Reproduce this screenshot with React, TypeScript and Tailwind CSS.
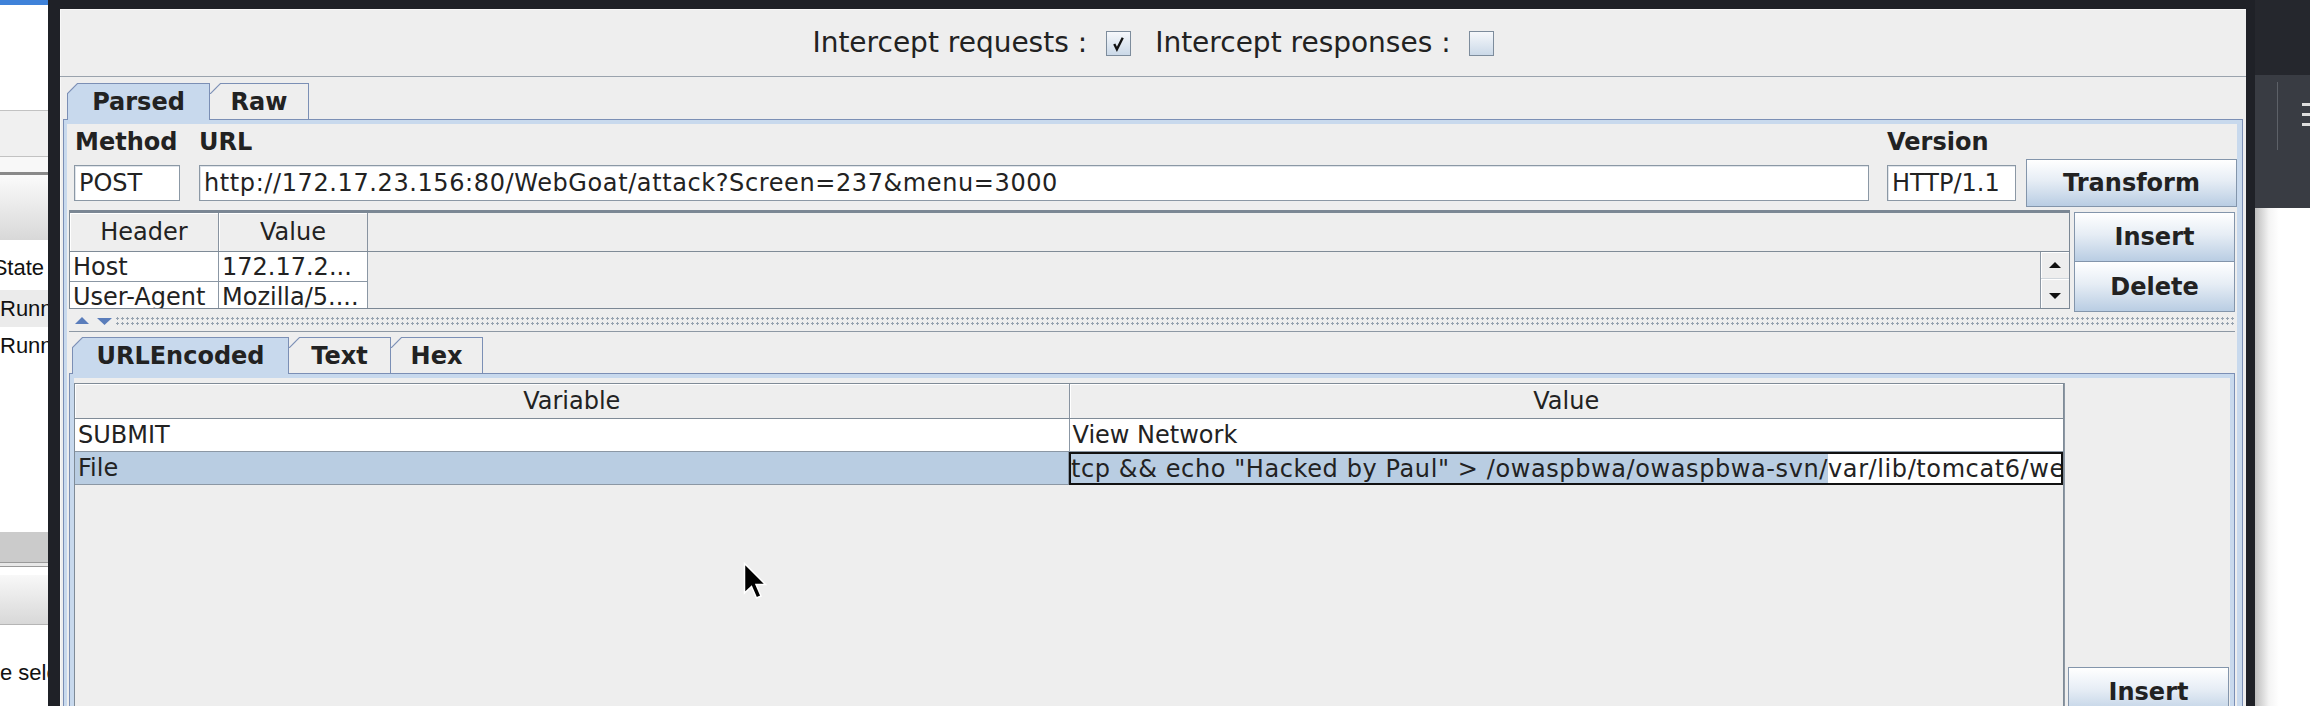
import React from "react";

// Metal look-and-feel tab with the chamfered top-left corner
function Tab({ label, selected, first, className }: { label: string; selected?: boolean; first?: boolean; className: string }) {
  return (
    <div
      className={`relative flex shrink-0 items-center justify-center border border-b-0 border-[#7b8fb5] text-[24px] font-bold text-[#222222] ${
        selected ? "z-10 h-[37px] bg-[#c8d9ed] pb-px" : "h-[36px] bg-[#eeeeee]"
      } ${className}`}
    >
      <svg
        className={`pointer-events-none absolute -top-px ${first ? "-left-px" : "left-0"}`}
        width="11"
        height="11"
        viewBox="0 0 11 11"
      >
        <polygon points="0,0 11,0 0,11" fill="#eeeeee" />
        <line x1="0" y1="11" x2="11" y2="0" stroke="#7b8fb5" strokeWidth="1.2" />
      </svg>
      {label}
    </div>
  );
}

function CheckBox({ checked, className }: { checked?: boolean; className: string }) {
  return (
    <div
      className={`flex h-[25px] w-[25px] shrink-0 items-center justify-center border border-[#7d8c9c] bg-[linear-gradient(to_bottom,#f6f8fb,#cbd9e8)] ${className}`}
    >
      {checked && (
        <svg width="17" height="17" viewBox="0 0 16 16">
          <path d="M4 8.5 L6.5 13.5 L12 2.5" fill="none" stroke="#111111" strokeWidth="2.2" />
        </svg>
      )}
    </div>
  );
}

function Field({ value, className }: { value: string; className: string }) {
  return (
    <div
      className={`flex h-[36px] items-center overflow-hidden whitespace-nowrap border border-[#8b98a5] bg-white pl-[4px] text-[24px] text-[#222222] shadow-[inset_1px_1px_0_#dfe4ea] ${className}`}
    >
      {value}
    </div>
  );
}

function Btn({ label, className }: { label: string; className: string }) {
  return (
    <div
      className={`flex shrink-0 items-center justify-center border border-[#8395ab] bg-[linear-gradient(to_bottom,#ffffff,#e6edf5_45%,#b9cde3)] text-[24px] font-bold text-[#222222] ${className}`}
    >
      {label}
    </div>
  );
}

function HeadCell({ label, className }: { label: string; className: string }) {
  return (
    <div
      className={`flex items-center justify-center border-r border-[#8893a0] text-[24px] shadow-[inset_1px_1px_0_#ffffff] ${className}`}
    >
      {label}
    </div>
  );
}

function BodyCell({ label, className }: { label: string; className: string }) {
  return (
    <div
      className={`flex items-center overflow-hidden whitespace-nowrap border-r border-b border-[#8b97a4] pl-[3px] text-[24px] ${className}`}
    >
      {label}
    </div>
  );
}

function LeftSliver() {
  return (
    <div className="flex w-[48px] shrink-0 flex-col overflow-hidden bg-white font-['Liberation_Sans',Arial,sans-serif] text-[22px] text-[#111111]">
      <div className="h-[5px] shrink-0 bg-[#3f82d9]" />
      <div className="h-[105px] shrink-0" />
      <div className="h-[47px] shrink-0 border-y border-[#c2c2c2] bg-[#f0f0f0]" />
      <div className="h-[15px] shrink-0 bg-[#f8f8f8]" />
      <div className="h-[68px] shrink-0 border-t-[3px] border-[#8a8a8a] bg-[linear-gradient(to_bottom,#fbfbfb,#d8d8d8)]" />
      <div className="h-[12px] shrink-0" />
      <div className="flex h-[30px] shrink-0 items-center justify-end whitespace-nowrap pr-[4px]">State</div>
      <div className="h-[8px] shrink-0" />
      <div className="flex h-[37px] shrink-0 items-center whitespace-nowrap bg-[#ebebeb]">Running</div>
      <div className="flex h-[37px] shrink-0 items-center whitespace-nowrap">Running</div>
      <div className="h-[168px] shrink-0" />
      <div className="h-[30px] shrink-0 bg-[#cbcbcb]" />
      <div className="h-[5px] shrink-0 border-y border-[#9a9a9a] bg-[#e8e8e8]" />
      <div className="h-[8px] shrink-0" />
      <div className="h-[50px] shrink-0 border-b border-[#b5b5b5] bg-[linear-gradient(to_bottom,#f8f8f8,#d8d8d8)]" />
      <div className="h-[30px] shrink-0" />
      <div className="flex h-[34px] shrink-0 items-center whitespace-nowrap">e selected</div>
    </div>
  );
}

function RightSliver() {
  return (
    <div className="flex w-[55px] shrink-0 flex-col">
      <div className="h-[75px] shrink-0 bg-[#25272d]" />
      <div className="flex h-[133px] shrink-0 items-start bg-[#393c43] pl-[22px] pt-[7px]">
        <div className="h-[68px] w-[2px] bg-[#5d6168]" />
        <div className="ml-[24px] mt-[21px] flex w-[14px] flex-col gap-[7px]">
          <div className="h-[3px] bg-[#dddddd]" />
          <div className="h-[3px] bg-[#dddddd]" />
          <div className="h-[3px] bg-[#dddddd]" />
        </div>
      </div>
      <div className="flex-1 bg-[linear-gradient(to_right,#bdbdbd,#f4f4f4_14px,#ffffff_24px)]" />
    </div>
  );
}

function HeaderTable() {
  return (
    <div className="flex h-[99px] flex-1 flex-col overflow-hidden border border-t-[3px] border-[#7b8794] bg-[#eeeeee]">
      <div className="flex h-[39px] shrink-0 border-b border-[#7f8b97]">
        <HeadCell label="Header" className="w-[149px]" />
        <HeadCell label="Value" className="w-[149px]" />
      </div>
      <div className="flex flex-1">
        <div className="flex-1">
          <div className="flex h-[30px]">
            <BodyCell label="Host" className="w-[149px] bg-white" />
            <BodyCell label="172.17.2..." className="w-[149px] bg-white" />
          </div>
          <div className="flex h-[30px]">
            <BodyCell label="User-Agent" className="w-[149px] bg-white" />
            <BodyCell label="Mozilla/5...." className="w-[149px] bg-white" />
          </div>
        </div>
        <div className="flex w-[29px] flex-col border-l border-[#8d98a4]">
          <div className="flex h-[27px] items-center justify-center border-b border-[#d0d6dc] shadow-[inset_1px_1px_0_#ffffff]">
            <svg width="12" height="6" viewBox="0 0 12 6">
              <polygon points="6,0 12,6 0,6" fill="#111111" />
            </svg>
          </div>
          <div className="flex flex-1 items-center justify-center shadow-[inset_1px_1px_0_#ffffff]">
            <svg width="12" height="6" viewBox="0 0 12 6">
              <polygon points="0,0 12,0 6,6" fill="#111111" />
            </svg>
          </div>
        </div>
      </div>
    </div>
  );
}

function Divider() {
  return (
    <div className="flex h-[20px] shrink-0 items-center border-b border-[#8d98a4] pl-[6px]">
      <svg width="40" height="9" viewBox="0 0 40 9" className="shrink-0">
        <polygon points="7,0 14,7 0,7" fill="#5a7dbb" />
        <polygon points="22,1 37,1 29.5,8" fill="#5a7dbb" />
      </svg>
      <div className="h-[11px] flex-1 bg-[radial-gradient(circle,#97a3b0_1px,transparent_1.4px)] bg-[length:5px_5px]" />
    </div>
  );
}

function ParamTable() {
  return (
    <div className="flex flex-1 flex-col overflow-hidden border-x border-t border-[#7f8b97] bg-[#eeeeee]">
      <div className="flex h-[35px] shrink-0 border-b border-[#7f8b97]">
        <HeadCell label="Variable" className="flex-1" />
        <HeadCell label="Value" className="flex-1 border-r-0" />
      </div>
      <div className="flex h-[33px] shrink-0">
        <BodyCell label="SUBMIT" className="flex-1 bg-white" />
        <BodyCell label="View Network" className="flex-1 border-r-0 bg-white" />
      </div>
      <div className="flex h-[33px] shrink-0">
        <BodyCell label="File" className="flex-1 bg-[#b9cde2]" />
        <div className="flex flex-1 overflow-hidden whitespace-nowrap border-2 border-[#111111] bg-white text-[24px] tracking-[0.6px]">
          <span className="flex items-center bg-[#b9cde2]">tcp &amp;&amp; echo "Hacked by Paul" &gt; /owaspbwa/owaspbwa-svn/</span>
          <span className="flex items-center">var/lib/tomcat6/webapps/WebGoat/</span>
        </div>
      </div>
    </div>
  );
}

function MainWindow() {
  return (
    <div className="flex w-[2186px] shrink-0 flex-col bg-[#eeeeee] text-[#222222] shadow-[inset_1px_0_0_#f8f8f8]">
      <div className="h-[9px] shrink-0 bg-[#1f2127]" />
      <div className="flex h-[68px] shrink-0 items-center justify-center border-y border-t-[#f7f7f7] border-b-[#9aa3ad]">
        <span className="text-[28px]">Intercept requests :</span>
        <CheckBox checked className="ml-[19px]" />
        <span className="ml-[24px] text-[28px]">Intercept responses :</span>
        <CheckBox className="ml-[18px]" />
      </div>

      {/* outer tabbed pane */}
      <div className="mx-[3px] mt-[6px] flex flex-1 flex-col">
        <div className="flex h-[36px] shrink-0 items-start pl-[4px]">
          <Tab label="Parsed" selected first className="w-[143px]" />
          <Tab label="Raw" className="-ml-px w-[100px]" />
        </div>
        <div className="flex flex-1 flex-col border-x border-t border-[#7b8fb5]">
          <div className="flex flex-1 flex-col border-t-[4px] border-l-[3px] border-r-[5px] border-[#c8d9ed] bg-[#eeeeee]">
            <div className="flex h-[35px] shrink-0 items-center pl-[8px] text-[24px] font-bold">
              <span className="w-[124px]">Method</span>
              <span className="flex-1">URL</span>
              <span className="w-[350px]">Version</span>
            </div>
            <div className="flex h-[48px] shrink-0 items-center pl-[7px]">
              <Field value="POST" className="w-[106px]" />
              <Field value="http://172.17.23.156:80/WebGoat/attack?Screen=237&menu=3000" className="ml-[19px] flex-1 tracking-[0.6px]" />
              <Field value="HTTP/1.1" className="ml-[18px] w-[129px]" />
              <Btn label="Transform" className="ml-[10px] h-[48px] w-[211px]" />
            </div>

            <div className="mt-[3px] flex flex-1 flex-col px-[2px]">
              <div className="flex h-[102px] shrink-0">
                <HeaderTable />
                <div className="ml-[4px] flex w-[161px] flex-col pt-[2px]">
                  <Btn label="Insert" className="h-[50px]" />
                  <Btn label="Delete" className="-mt-px h-[51px]" />
                </div>
              </div>
              <Divider />

              {/* lower tabbed pane */}
              <div className="flex flex-1 flex-col pt-[5px]">
                <div className="flex h-[36px] shrink-0 items-start pl-[3px]">
                  <Tab label="URLEncoded" selected first className="w-[217px]" />
                  <Tab label="Text" className="-ml-px w-[103px]" />
                  <Tab label="Hex" className="-ml-px w-[93px]" />
                </div>
                <div className="flex flex-1 flex-col border-x border-t border-[#7b8fb5]">
                  <div className="flex flex-1 border-x-[4px] border-t-[4px] border-[#c8d9ed] bg-[#eeeeee] pt-[5px]">
                    <ParamTable />
                    <div className="flex w-[166px] shrink-0 flex-col border-l border-[#8d98a4] pl-[3px]">
                      <Btn label="Insert" className="mt-[284px] h-[50px] w-[161px]" />
                    </div>
                  </div>
                </div>
              </div>
            </div>
          </div>
        </div>
      </div>
    </div>
  );
}

function Cursor() {
  return (
    <svg className="pointer-events-none absolute left-[743px] top-[562px]" width="26" height="40" viewBox="0 0 26 40">
      <path d="M1.5 1.5 L1.5 31 L8.5 24.5 L13.5 36 L18 34 L13 22.5 L22.5 22.5 Z" fill="#000000" stroke="#ffffff" strokeWidth="1.5" />
    </svg>
  );
}

export default function App() {
  return (
    <div className="relative flex h-[706px] w-[2310px] overflow-hidden bg-[#1f2127] font-['DejaVu_Sans',sans-serif]">
      <LeftSliver />
      <div className="w-[12px] shrink-0 bg-[#1f2127]" />
      <MainWindow />
      <div className="w-[9px] shrink-0 bg-[#1f2127]" />
      <RightSliver />
      <Cursor />
    </div>
  );
}
